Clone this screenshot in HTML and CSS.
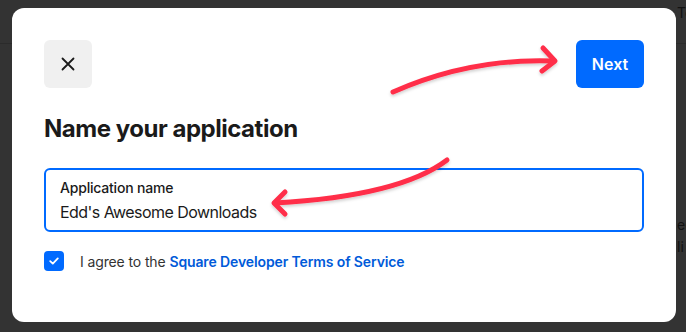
FILE: index.html
```html
<!DOCTYPE html>
<html lang="en">
<head>
    <meta charset="UTF-8">
    <meta name="viewport" content="width=device-width, initial-scale=1.0">
    <title>Name your application</title>
    <link rel="stylesheet" href="styles.css">
</head>
<body>
    <div class="backdrop">
        <div class="bg-line"></div>
        <span class="bg-text bg-top">To</span>
        <span class="bg-text bg-ee">ee</span>
        <span class="bg-text bg-li">li</span>
    </div>

    <div class="modal">
        <div class="modal-head">
            <button class="close-btn" aria-label="Close">
                <svg width="16" height="16" viewBox="0 0 16 16">
                    <path d="M2.5 2.5 L13.5 13.5 M13.5 2.5 L2.5 13.5" stroke="#1a1a1a" stroke-width="1.8" stroke-linecap="round"/>
                </svg>
            </button>
            <button class="next-btn">Next</button>
        </div>

        <h1 class="title">Name your application</h1>

        <div class="field">
            <label class="field-label">Application name</label>
            <div class="field-value">Edd's Awesome Downloads</div>
        </div>

        <div class="agree">
            <span class="checkbox">
                <svg width="12" height="12" viewBox="0 0 12 12">
                    <path d="M2.2 6.2 L4.8 8.6 L9.8 3.4" fill="none" stroke="#fff" stroke-width="1.8" stroke-linecap="round" stroke-linejoin="round"/>
                </svg>
            </span>
            <span class="agree-text">I agree to the <a class="agree-link">Square Developer Terms of Service</a></span>
        </div>
    </div>

    <svg class="arrows" width="686" height="332" viewBox="0 0 686 332">
        <defs>
            <filter id="shadow" x="-10%" y="-30%" width="120%" height="160%">
                <feDropShadow dx="0" dy="2" stdDeviation="1.5" flood-color="#000" flood-opacity="0.18"/>
            </filter>
        </defs>
        <g fill="none" stroke="#ff2e48" stroke-width="5" stroke-linecap="round" stroke-linejoin="round" filter="url(#shadow)">
            <path d="M393 92 Q470 58 553 61"/>
            <path d="M543 48 L555 61 L542 71"/>
            <path d="M447 160 Q400 196 275 203"/>
            <path d="M285 192 L274 203 L285 214"/>
        </g>
    </svg>
</body>
</html>
```

FILE: styles.css
```css
body { margin: 0; width: 686px; height: 332px; background-color: #333333; font-family: Inter, "Noto Sans", sans-serif; overflow: hidden; position: relative; }

.backdrop { position: absolute; inset: 0; }
.bg-line { position: absolute; left: 0; right: 0; top: 43px; height: 1px; background: #2b2b2b; }
.bg-text { position: absolute; color: #111; font-size: 14px; white-space: nowrap; }
.bg-top { left: 677px; top: 4px; }
.bg-ee { left: 677px; top: 216px; }
.bg-li { left: 677px; top: 238px; }

.modal { position: relative; margin: 8px 0 0 12px; width: 664px; height: 314px; box-sizing: border-box; padding: 32px; background: #ffffff; border-radius: 12px; }

.modal-head { display: flex; justify-content: space-between; align-items: center; height: 48px; }
.close-btn { width: 48px; height: 48px; border: none; border-radius: 6px; background: #f0f0f0; display: flex; align-items: center; justify-content: center; padding: 0; }
.next-btn { width: 68px; height: 48px; border: none; border-radius: 6px; background: #006aff; color: #fff; font-family: Inter, sans-serif; font-size: 16px; font-weight: 600; padding: 0; }

.title { margin: 25px 0 23px; font-size: 24px; line-height: 32px; font-weight: 700; color: #1a1a1a; letter-spacing: -0.48px; }

.field { height: 64px; box-sizing: border-box; border: 2px solid #006aff; border-radius: 6px; padding: 8px 14px 0; }
.field-label { display: block; font-size: 14px; line-height: 20px; font-weight: 500; color: #1a1a1a; letter-spacing: -0.2px; }
.field-value { margin-top: 2px; font-size: 16px; line-height: 24px; color: #1a1a1a; letter-spacing: -0.55px; }

.agree { display: flex; align-items: center; margin-top: 19px; height: 20px; }
.checkbox { width: 20px; height: 20px; border-radius: 4px; background: #006aff; display: flex; align-items: center; justify-content: center; }
.agree-text { margin-left: 16px; font-size: 14px; color: #333; letter-spacing: -0.12px; }
.agree-link { color: #005ad9; font-weight: 600; }

.arrows { position: absolute; left: 0; top: 0; pointer-events: none; }
```
